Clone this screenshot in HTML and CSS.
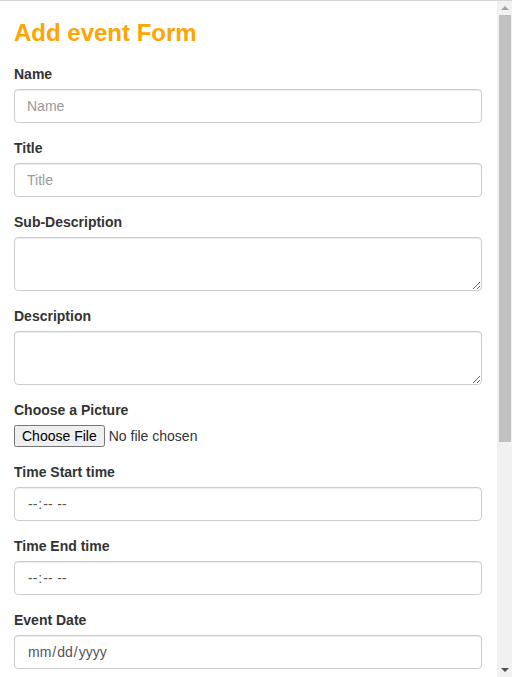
FILE: index.html
```html
<!DOCTYPE html>
<html lang="en">
<head>
<meta charset="utf-8">
<title>Add event Form</title>
<link rel="stylesheet" href="styles.css">
</head>
<body>
<div class="page">
  <div class="container">
    <h3 class="title">Add event Form</h3>
    <form class="form">
      <div class="form-group">
        <label class="label" for="name">Name</label>
        <input class="form-control" id="name" type="text" placeholder="Name">
      </div>
      <div class="form-group">
        <label class="label" for="title">Title</label>
        <input class="form-control" id="title" type="text" placeholder="Title">
      </div>
      <div class="form-group">
        <label class="label" for="subdesc">Sub-Description</label>
        <textarea class="form-control textarea" id="subdesc" rows="2"></textarea>
      </div>
      <div class="form-group">
        <label class="label" for="desc">Description</label>
        <textarea class="form-control textarea" id="desc" rows="2"></textarea>
      </div>
      <div class="form-group">
        <label class="label" for="pic">Choose a Picture</label>
        <input class="file" id="pic" type="file">
      </div>
      <div class="form-group">
        <label class="label" for="tstart">Time Start time</label>
        <input class="form-control" id="tstart" type="time">
      </div>
      <div class="form-group">
        <label class="label" for="tend">Time End time</label>
        <input class="form-control" id="tend" type="time">
      </div>
      <div class="form-group">
        <label class="label" for="edate">Event Date</label>
        <input class="form-control" id="edate" type="date">
      </div>
    </form>
  </div>
</div>
<div class="scrollbar" aria-hidden="true">
  <div class="sb-button"><span class="arrow-up"></span></div>
  <div class="sb-track">
    <div class="sb-thumb"></div>
  </div>
  <div class="sb-button"><span class="arrow-down"></span></div>
</div>
</body>
</html>
```

FILE: styles.css
```css
html {
  margin: 0;
  height: 100%;
  overflow: hidden;
}
body {
  margin: 0;
  height: 100%;
  display: flex;
  border-top: 1px solid #d6d6d6;
  box-sizing: border-box;
  font-family: "Liberation Sans", Arial, sans-serif;
  font-size: 14px;
  line-height: 20px;
  color: #333;
  background: #fff;
}
.page {
  flex: 1;
  min-width: 0;
  overflow: hidden;
}
.container {
  padding: 0 15px 0 14px;
}
.title {
  margin: 19px 0 18px;
  font-size: 24px;
  line-height: 26px;
  font-weight: bold;
  color: #ffa500;
}
.form {
  margin: 0;
}
.form-group {
  margin-bottom: 15px;
}
.label {
  display: block;
  margin-bottom: 5px;
  font-weight: bold;
}
.form-control {
  display: block;
  box-sizing: border-box;
  width: 100%;
  height: 34px;
  margin: 0;
  padding: 6px 12px;
  font-family: inherit;
  font-size: 14px;
  line-height: 20px;
  color: #555;
  background: #fff;
  border: 1px solid #ccc;
  border-radius: 4px;
  box-shadow: inset 0 1px 1px rgba(0, 0, 0, 0.075);
}
.form-control::placeholder {
  color: #999;
}
.form-control::-webkit-calendar-picker-indicator {
  display: none;
}
.textarea {
  height: 54px;
  resize: vertical;
}
.file {
  display: block;
  margin: 0;
  font-family: inherit;
  font-size: 14px;
  color: #333;
}

/* scrollbar */
.scrollbar {
  width: 15px;
  flex: none;
  display: flex;
  flex-direction: column;
  background: #f1f1f1;
}
.sb-button {
  height: 14px;
  flex: none;
  display: flex;
  align-items: center;
  justify-content: center;
}
.sb-track {
  flex: 1;
  display: flex;
  flex-direction: column;
}
.sb-thumb {
  height: 427px;
  margin: 0 1px 0 2px;
  background: #c1c1c1;
}
.arrow-up {
  width: 0;
  height: 0;
  border-left: 4px solid transparent;
  border-right: 4px solid transparent;
  border-bottom: 4px solid #a3a3a3;
}
.arrow-down {
  width: 0;
  height: 0;
  border-left: 4px solid transparent;
  border-right: 4px solid transparent;
  border-top: 4px solid #505050;
}
```
